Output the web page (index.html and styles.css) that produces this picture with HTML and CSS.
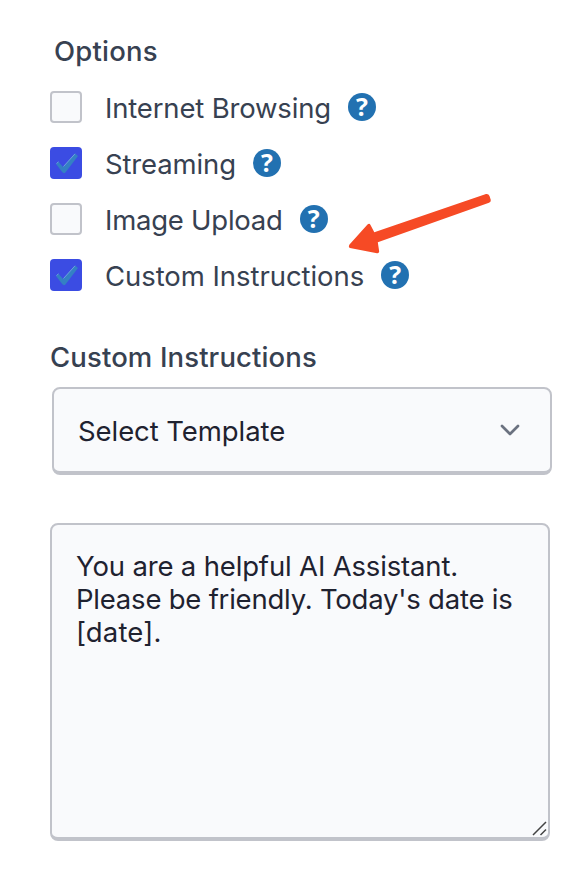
FILE: index.html
```
<!DOCTYPE html>
<html lang="en">
<head>
<meta charset="utf-8">
<title>Options</title>
<link rel="stylesheet" href="styles.css">
</head>
<body>
<main class="panel">
  <h2 class="heading heading-options">Options</h2>
  <div class="options">
    <div class="option"><span class="box"></span><span class="label browsing">Internet Browsing</span><span class="help">?</span></div>
    <div class="option"><span class="box checked"><svg viewBox="0 0 32 32"><path d="M6 17 8.500 14.700 13 20 25 6.500 28 9 15.400 25.500Q13.800 27 12.200 25Z"/><path class="shine" d="M6.500 16.500 8.500 14.800M13.500 19.500 25 6.800"/></svg></span><span class="label streaming">Streaming</span><span class="help">?</span></div>
    <div class="option"><span class="box"></span><span class="label upload">Image Upload</span><span class="help">?</span></div>
    <div class="option"><span class="box checked"><svg viewBox="0 0 32 32"><path d="M6 17 8.500 14.700 13 20 25 6.500 28 9 15.400 25.500Q13.800 27 12.200 25Z"/><path class="shine" d="M6.500 16.500 8.500 14.800M13.500 19.500 25 6.800"/></svg></span><span class="label custom">Custom Instructions</span><span class="help">?</span></div>
  </div>
  <h2 class="heading heading-custom">Custom Instructions</h2>
  <div class="select"><span class="select-text">Select Template</span><svg class="chevron" viewBox="0 0 20 12"><path d="M2 2 10 10 18 2"/></svg></div>
  <div class="textarea">
    <div class="line first">You are a helpful AI Assistant.</div>
    <div class="line second">Please be friendly. Today's date is</div>
    <div class="line third">[date].</div>
    <svg class="grip" viewBox="0 0 16 16"><path d="M1 15 14 2M8.500 15 14 9.500"/></svg>
  </div>
  <svg class="arrow" viewBox="0 0 160 80"><path d="M146 14 Q148.500 13.500 149.500 16 L150.800 20 Q151 22 149 22.800 L37.800 62.300 39.200 71.500Q39 73.500 37 73.200L10 68Q8 67 9.500 64.500L27.500 44.500Q29.500 43 30.500 45L34.300 52.300Z"/></svg>
</main>
</body>
</html>
```
FILE: styles.css
```
* { box-sizing: border-box; }
body { margin: 0; background: #fff; color: #374151; font-family: Inter, "Liberation Sans", sans-serif; font-size: 27.5px; }
.panel { position: relative; height: 876px; padding: 33px 34px 0 50px; display: flex; flex-direction: column; white-space: nowrap; }
.heading { margin: 0; font-size: 27.5px; line-height: 36px; font-weight: 550; }
.heading-options { margin-left: 4px; letter-spacing: .2px; }
.options { margin-top: 10px; }
.option { height: 56px; display: flex; align-items: center; }
.box { width: 32px; height: 32px; flex: none; border: 2px solid #c1c3ca; border-radius: 4px; background: #f9fafc; }
.box.checked { border: 0; background: #3b4ce3; }
.box svg { display: block; width: 32px; height: 32px; fill: #3480c4; }
.box .shine { fill: none; stroke: #85b6e4; stroke-width: .7; }
.label { margin: 2px 17px 0 23px; }
.browsing { letter-spacing: -.17px; }
.streaming { letter-spacing: -.14px; }
.upload { letter-spacing: -.24px; }
.custom { letter-spacing: -.06px; }
.help { width: 28px; height: 28px; border-radius: 50%; background: #2271b1; color: #fff; font: 700 25px/27px "Open Sans", sans-serif; text-align: center; }
.heading-custom { margin-top: 36px; letter-spacing: .13px; }
.select { width: 500px; height: 88px; margin: 12px 0 0 2px; padding: 0 30px 0 24px; display: flex; align-items: center; justify-content: space-between; border: 2px solid #c1c3ca; border-bottom-width: 4px; border-radius: 8px; background: #f9fafc; color: #1f2230; }
.select-text { margin-top: 2px; letter-spacing: -.07px; }
.chevron { width: 20px; height: 12px; fill: none; stroke: #6b7280; stroke-width: 2.7; stroke-linecap: round; stroke-linejoin: round; }
.textarea { position: relative; width: 500px; height: 318px; margin-top: 48px; padding: 25px 24px; border: 2px solid #c1c3ca; border-bottom-width: 4px; border-radius: 8px; background: #f9fafc; color: #1f2230; line-height: 33px; }
.first { letter-spacing: -.16px; }
.second { letter-spacing: -.22px; }
.third { letter-spacing: .15px; }
.grip { position: absolute; right: 0; bottom: 1px; width: 16px; height: 16px; fill: none; stroke: #444; stroke-width: 1.5; }
.arrow { position: absolute; left: 340px; top: 180px; width: 160px; height: 80px; fill: #f64a25; }
```
